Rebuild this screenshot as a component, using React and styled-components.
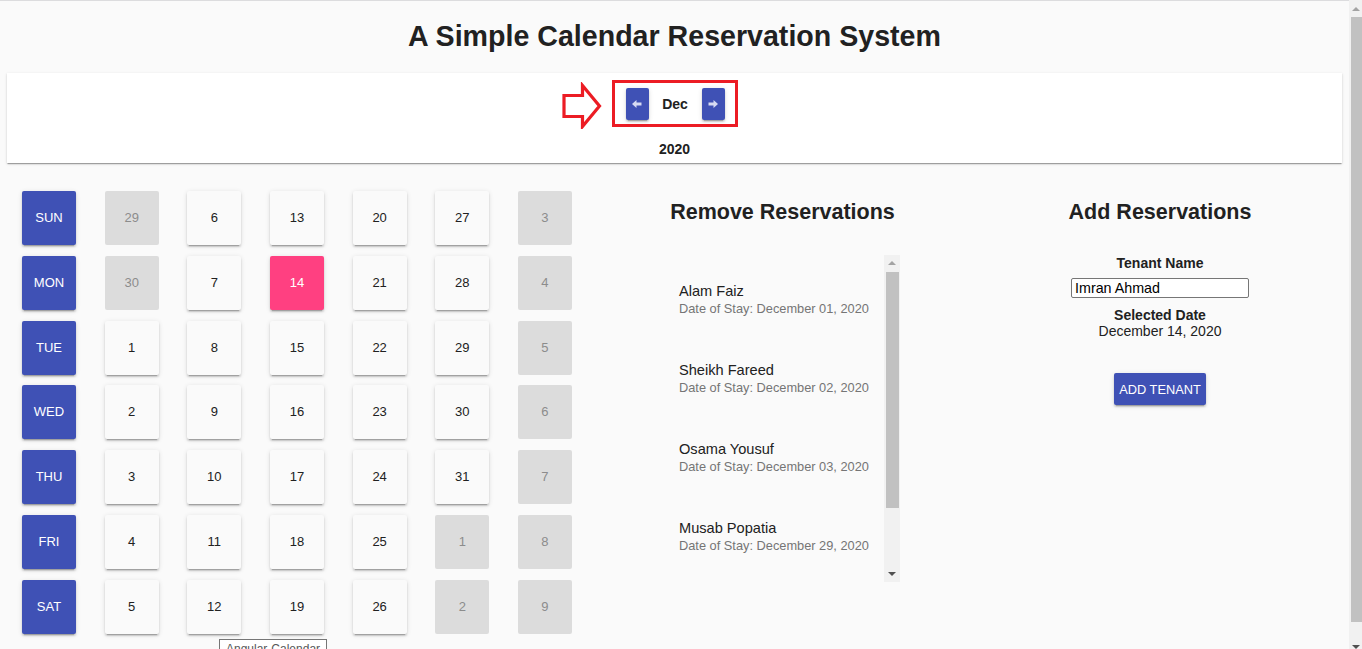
import React from "react";
import styled, { createGlobalStyle } from "styled-components";

const GlobalStyle = createGlobalStyle`
  html, body {
    margin: 0;
    padding: 0;
    background: #fafafa;
  }
  body {
    border-top: 1px solid #dcdcde;
    font-family: "Liberation Sans", Arial, sans-serif;
    color: #212121;
  }
`;

const Page = styled.div`
  position: relative;
  width: calc(100vw - 13px);
  padding-bottom: 26px;
`;

const Title = styled.h1`
  margin: 0;
  padding-top: 19px;
  font-size: 28.6px;
  line-height: 32px;
  font-weight: 700;
  text-align: center;
  color: #212121;
`;

const NavCard = styled.div`
  margin: 21px 7px 0 7px;
  padding: 7px 0 6px;
  background: #fff;
  box-shadow: 0 2px 1px -1px rgba(0, 0, 0, 0.2), 0 1px 1px 0 rgba(0, 0, 0, 0.14),
    0 1px 3px 0 rgba(0, 0, 0, 0.12);
  display: flex;
  flex-direction: column;
  align-items: center;
`;

const NavBox = styled.div`
  position: relative;
  display: flex;
  align-items: center;
  height: 41px;
  padding: 0 10px 0 11px;
  border: 3px solid #ec1c24;
`;

const Callout = styled.svg`
  position: absolute;
  left: -54px;
  top: -1px;
`;

const NavButton = styled.button`
  width: 23px;
  height: 32px;
  padding: 0;
  border: none;
  border-radius: 2px;
  background: #3f51b5;
  display: flex;
  align-items: center;
  justify-content: center;
  box-shadow: 0 3px 1px -2px rgba(0, 0, 0, 0.2), 0 2px 2px 0 rgba(0, 0, 0, 0.14),
    0 1px 5px 0 rgba(0, 0, 0, 0.12);
`;

const Month = styled.span`
  width: 53px;
  text-align: center;
  font-size: 14px;
  font-weight: 700;
  color: #212121;
`;

const Year = styled.div`
  margin-top: 14px;
  font-size: 14px;
  line-height: 16px;
  font-weight: 700;
  color: #212121;
`;

const Main = styled.div`
  display: grid;
  grid-template-columns: 594px 377px 1fr;
  margin-top: 28px;
`;

const CalendarGrid = styled.div`
  display: grid;
  grid-template-rows: repeat(7, 54px);
  grid-auto-columns: 54px;
  grid-auto-flow: column;
  column-gap: 28.67px;
  row-gap: 10.83px;
  padding-left: 22px;
`;

const Cell = styled.div`
  display: flex;
  align-items: center;
  justify-content: center;
  padding-bottom: 1px;
  box-sizing: border-box;
  font-size: 13px;
  border-radius: 2px;
  background: ${(p) =>
    p.$kind === "head"
      ? "#3f51b5"
      : p.$kind === "selected"
      ? "#ff4081"
      : p.$kind === "other"
      ? "#dcdcdc"
      : "#fafafa"};
  color: ${(p) =>
    p.$kind === "head" || p.$kind === "selected"
      ? "#fff"
      : p.$kind === "other"
      ? "#8c8c8c"
      : "#212121"};
  box-shadow: ${(p) =>
    p.$kind === "other"
      ? "none"
      : "0 3px 1px -2px rgba(0,0,0,0.2), 0 2px 2px 0 rgba(0,0,0,0.14), 0 1px 5px 0 rgba(0,0,0,0.12)"};
`;

const Column = styled.section`
  display: flex;
  flex-direction: column;
  align-items: center;
  padding-top: 9px;
`;

const Heading = styled.h2`
  margin: 0;
  font-size: 21.5px;
  line-height: 24px;
  font-weight: 700;
  color: #212121;
`;

const ReservationList = styled.div`
  margin-top: 31px;
  width: 235px;
  height: 327px;
  display: flex;
`;

const ListContent = styled.div`
  flex: 1;
  overflow: hidden;
  padding-top: 5px;
`;

const Item = styled.div`
  padding: 22px 14px;
`;

const Name = styled.div`
  font-size: 14.6px;
  line-height: 18px;
  color: #212121;
`;

const StayDate = styled.div`
  font-size: 12.8px;
  line-height: 17px;
  color: #757575;
`;

const Label = styled.div`
  font-size: 14px;
  line-height: 16px;
  font-weight: 700;
  color: #212121;
  margin-top: ${(p) => p.$top || 0}px;
`;

const Value = styled.div`
  font-size: 14px;
  line-height: 16px;
  color: #212121;
`;

const NameInput = styled.input`
  margin-top: 7px;
  width: 178px;
  height: 20px;
  box-sizing: border-box;
  border: 1px solid #767676;
  border-radius: 2px;
  padding: 0 3px;
  font-family: "Liberation Sans", Arial, sans-serif;
  font-size: 14.3px;
  color: #000;
  background: #fff;
`;

const AddButton = styled.button`
  margin-top: 34px;
  width: 92px;
  height: 32px;
  border: none;
  border-radius: 2px;
  background: #3f51b5;
  color: #fff;
  font-family: "Liberation Sans", Arial, sans-serif;
  font-size: 12.8px;
  padding: 0;
  box-shadow: 0 3px 1px -2px rgba(0, 0, 0, 0.2), 0 2px 2px 0 rgba(0, 0, 0, 0.14),
    0 1px 5px 0 rgba(0, 0, 0, 0.12);
`;

const Tooltip = styled.div`
  position: absolute;
  left: 219px;
  top: 638px;
  padding: 2px 6px 3px;
  border: 1px solid #767676;
  background: #fff;
  color: #575757;
  font-size: 12px;
  line-height: 14px;
  white-space: nowrap;
`;

/* Scrollbar drawing (browser chrome in the screenshot) */
const Track = styled.div`
  width: ${(p) => p.$w}px;
  height: ${(p) => p.$h}px;
  flex: none;
  background: #f1f1f1;
  display: flex;
  flex-direction: column;
`;

const PageBar = styled(Track)`
  position: fixed;
  top: 0;
  right: 0;
  z-index: 10;
`;

const ScrollButton = styled.div`
  height: ${(p) => p.$size}px;
  flex: none;
  display: flex;
  align-items: center;
  padding-left: ${(p) => p.$arrowLeft}px;
  &::after {
    content: "";
    width: 0;
    height: 0;
    border-left: 4px solid transparent;
    border-right: 4px solid transparent;
    ${(p) =>
      p.$down
        ? "border-top: 4px solid #505050;"
        : "border-bottom: 4px solid #a3a3a3;"}
  }
`;

const Thumb = styled.div`
  flex: none;
  margin-top: ${(p) => p.$top}px;
  margin-left: ${(p) => p.$inset}px;
  width: ${(p) => p.$tw}px;
  height: ${(p) => p.$th}px;
  background: #c1c1c1;
`;

const Spacer = styled.div`
  flex: 1;
`;

const Arrow = ({ dir }) => (
  <svg width="10" height="8" viewBox="0 0 10 8">
    {dir === "left" ? (
      <path d="M0 4 L4.5 0 V2.5 H9.5 V5.5 H4.5 V8 Z" fill="#d6daf2" />
    ) : (
      <path d="M10 4 L5.5 0 V2.5 H0.5 V5.5 H5.5 V8 Z" fill="#d6daf2" />
    )}
  </svg>
);

const days = ["SUN", "MON", "TUE", "WED", "THU", "FRI", "SAT"];
const weeks = [
  [29, 30, 1, 2, 3, 4, 5].map((d, i) => ({ d, other: i < 2 })),
  [6, 7, 8, 9, 10, 11, 12].map((d) => ({ d })),
  [13, 14, 15, 16, 17, 18, 19].map((d) => ({ d, sel: d === 14 })),
  [20, 21, 22, 23, 24, 25, 26].map((d) => ({ d })),
  [27, 28, 29, 30, 31, 1, 2].map((d, i) => ({ d, other: i > 4 })),
  [3, 4, 5, 6, 7, 8, 9].map((d) => ({ d, other: true })),
];

const reservations = [
  ["Alam Faiz", "December 01, 2020"],
  ["Sheikh Fareed", "December 02, 2020"],
  ["Osama Yousuf", "December 03, 2020"],
  ["Musab Popatia", "December 29, 2020"],
];

export default function App() {
  return (
    <Page>
      <GlobalStyle />
      <Title>A Simple Calendar Reservation System</Title>
      <NavCard>
        <NavBox>
          <Callout width="42" height="47" viewBox="0 0 42 47">
            <path
              d="M3 13.5 H21.5 V3.5 L38.5 24 L21.5 44.5 V34.5 H3 Z"
              fill="#fff"
              stroke="#ec1c24"
              strokeWidth="3.2"
              strokeLinejoin="miter"
            />
          </Callout>
          <NavButton aria-label="previous">
            <Arrow dir="left" />
          </NavButton>
          <Month>Dec</Month>
          <NavButton aria-label="next">
            <Arrow dir="right" />
          </NavButton>
        </NavBox>
        <Year>2020</Year>
      </NavCard>
      <Main>
        <CalendarGrid>
          {days.map((d) => (
            <Cell key={d} $kind="head">
              {d}
            </Cell>
          ))}
          {weeks.map((w, wi) =>
            w.map((c, ci) => (
              <Cell
                key={`${wi}-${ci}`}
                $kind={c.sel ? "selected" : c.other ? "other" : "day"}
              >
                {c.d}
              </Cell>
            ))
          )}
        </CalendarGrid>
        <Column>
          <Heading>Remove Reservations</Heading>
          <ReservationList>
            <ListContent>
              {reservations.map(([n, d]) => (
                <Item key={n}>
                  <Name>{n}</Name>
                  <StayDate>Date of Stay: {d}</StayDate>
                </Item>
              ))}
            </ListContent>
            <Track $w={16} $h={327}>
              <ScrollButton $size={16} $arrowLeft={4} />
              <Thumb $top={1} $inset={2} $tw={13} $th={236} />
              <Spacer />
              <ScrollButton $size={16} $arrowLeft={4} $down />
            </Track>
          </ReservationList>
        </Column>
        <Column>
          <Heading>Add Reservations</Heading>
          <Label $top={31}>Tenant Name</Label>
          <NameInput defaultValue="Imran Ahmad" />
          <Label $top={9}>Selected Date</Label>
          <Value>December 14, 2020</Value>
          <AddButton>ADD TENANT</AddButton>
        </Column>
      </Main>
      <Tooltip>Angular-Calendar</Tooltip>
      <PageBar $w={13} $h={655}>
        <ScrollButton $size={17} $arrowLeft={3} />
        <Thumb $top={0} $inset={2} $tw={11} $th={605} />
        <Spacer />
        <ScrollButton $size={17} $arrowLeft={3} $down />
      </PageBar>
    </Page>
  );
}
